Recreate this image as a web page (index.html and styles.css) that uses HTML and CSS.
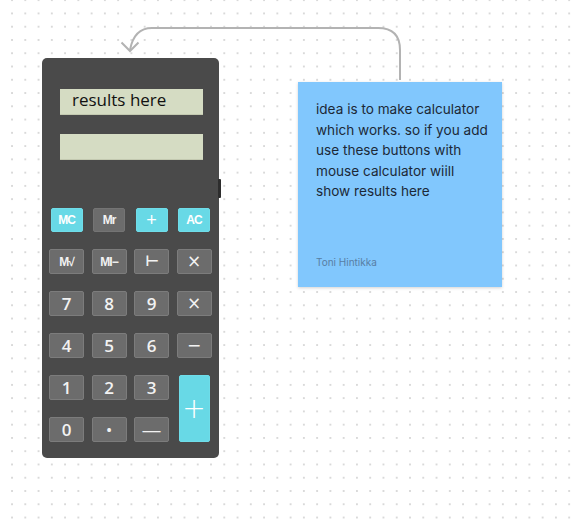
FILE: index.html
```html
<!DOCTYPE html>
<html>
<head>
<meta charset="utf-8">
<link rel="stylesheet" href="styles.css">
</head>
<body>
<div class="canvas">
  <div class="calc">
    <div class="display">results here</div>
    <div class="display display-empty"></div>
    <div class="keys">
      <div class="key key-top key-cyan">MC</div>
      <div class="key key-top">Mr</div>
      <div class="key key-top key-cyan key-plus-small">+</div>
      <div class="key key-top key-cyan">AC</div>

      <div class="key key-fn">M√</div>
      <div class="key key-fn">MI−</div>
      <div class="key key-fn key-tack">⊢</div>
      <div class="key key-op">×</div>

      <div class="key">7</div>
      <div class="key">8</div>
      <div class="key">9</div>
      <div class="key key-op">×</div>

      <div class="key">4</div>
      <div class="key">5</div>
      <div class="key">6</div>
      <div class="key key-op">−</div>

      <div class="key">1</div>
      <div class="key">2</div>
      <div class="key">3</div>
      <div class="key key-cyan key-plus">+</div>

      <div class="key">0</div>
      <div class="key key-dot">•</div>
      <div class="key key-op key-minus">—</div>
    </div>
    <div class="nub"></div>
  </div>

  <div class="note">
    <p class="note-text">idea is to make calculator which works. so if you add use these buttons with mouse calculator wiill show results here</p>
    <p class="note-author">Toni Hintikka</p>
  </div>
</div>

<svg class="connector" width="577" height="525" viewBox="0 0 577 525">
  <path d="M400 80 V50 Q400 28 378 28 H152 Q134 28 130 50" fill="none" stroke="#b3b3b3" stroke-width="2"/>
  <path d="M121.5 42.5 L130 51 L138.5 42.5" fill="none" stroke="#b3b3b3" stroke-width="2"/>
</svg>
</body>
</html>
```

FILE: styles.css
```css
html, body {
  margin: 0;
  padding: 0;
}

body {
  width: 577px;
  height: 525px;
  overflow: hidden;
  position: relative;
  background-color: #ffffff;
  background-image: radial-gradient(circle, #d9d9d9 0.8px, rgba(255,255,255,0) 1.3px);
  background-size: 13.27px 13.27px;
  background-position: 5.4px 6.8px;
  font-family: "Open Sans", "Liberation Sans", sans-serif;
}

.canvas {
  display: flex;
  align-items: flex-start;
  padding: 58px 0 0 42px;
}

.calc {
  position: relative;
  width: 177px;
  height: 400px;
  box-sizing: border-box;
  background: #4a4a4a;
  border-radius: 5px;
  padding-top: 31px;
  display: flex;
  flex-direction: column;
}

.display {
  margin-left: 18px;
  width: 143px;
  height: 26px;
  box-sizing: border-box;
  background: #d5dcc3;
  border-bottom: 1px solid #c3c9b0;
  color: #111111;
  font-size: 17px;
  line-height: 22px;
  padding-left: 12px;
}

.display-empty {
  margin-top: 19px;
}

.keys {
  margin-top: 48px;
  margin-left: 7px;
  display: grid;
  grid-template-columns: repeat(4, 35px);
  grid-template-rows: 24px repeat(5, 25px);
  column-gap: 7.5px;
  row-gap: 17px;
}

.key {
  box-sizing: border-box;
  background: #6c6c6c;
  border: 1px solid #7c7c7c;
  border-radius: 2px;
  color: #f2f2f2;
  font-weight: 600;
  font-size: 17px;
  display: flex;
  align-items: center;
  justify-content: center;
  line-height: 1;
}

.key-top {
  width: 32px;
  justify-self: center;
  font-size: 12px;
  font-weight: 700;
  letter-spacing: -1px;
  font-family: "Liberation Sans", sans-serif;
  border-color: #747474;
}

.key-cyan {
  background: #68d9e6;
  border-color: #6fdde9;
  color: #ffffff;
}

.key-plus-small {
  font-size: 18px;
  font-weight: 400;
  letter-spacing: 0;
}

.key-fn {
  font-size: 12px;
  font-weight: 700;
  letter-spacing: -1px;
  font-family: "Liberation Sans", sans-serif;
}

.key-tack {
  font-size: 15px;
  font-family: "DejaVu Sans", sans-serif;
}

.key-op {
  font-size: 17px;
  font-weight: 400;
  font-family: "DejaVu Sans", sans-serif;
}

.key-minus {
  font-size: 20px;
}

.key-dot {
  font-size: 15px;
}

.key-plus {
  grid-row: span 2;
  width: 31px;
  justify-self: center;
  font-size: 28px;
  font-weight: 300;
  font-family: "DejaVu Sans", sans-serif;
}

.nub {
  position: absolute;
  right: -2px;
  top: 121px;
  width: 3px;
  height: 19px;
  background: #2d2d2d;
  border-radius: 1px;
}

.note {
  margin-left: 79px;
  margin-top: 24px;
  width: 204px;
  height: 205px;
  box-sizing: border-box;
  background: #81c7fd;
  box-shadow: 0 1px 3px rgba(0, 0, 0, 0.18);
  padding: 17px 12px 19px 18px;
  display: flex;
  flex-direction: column;
  justify-content: space-between;
  font-family: Inter, "Noto Sans", sans-serif;
}

.note-text {
  margin: 0;
  font-size: 13.6px;
  line-height: 20.6px;
  color: #1c2937;
}

.note-author {
  margin: 0;
  font-size: 10px;
  line-height: 12px;
  color: #587ea3;
}

.connector {
  position: absolute;
  left: 0;
  top: 0;
  pointer-events: none;
}
```
